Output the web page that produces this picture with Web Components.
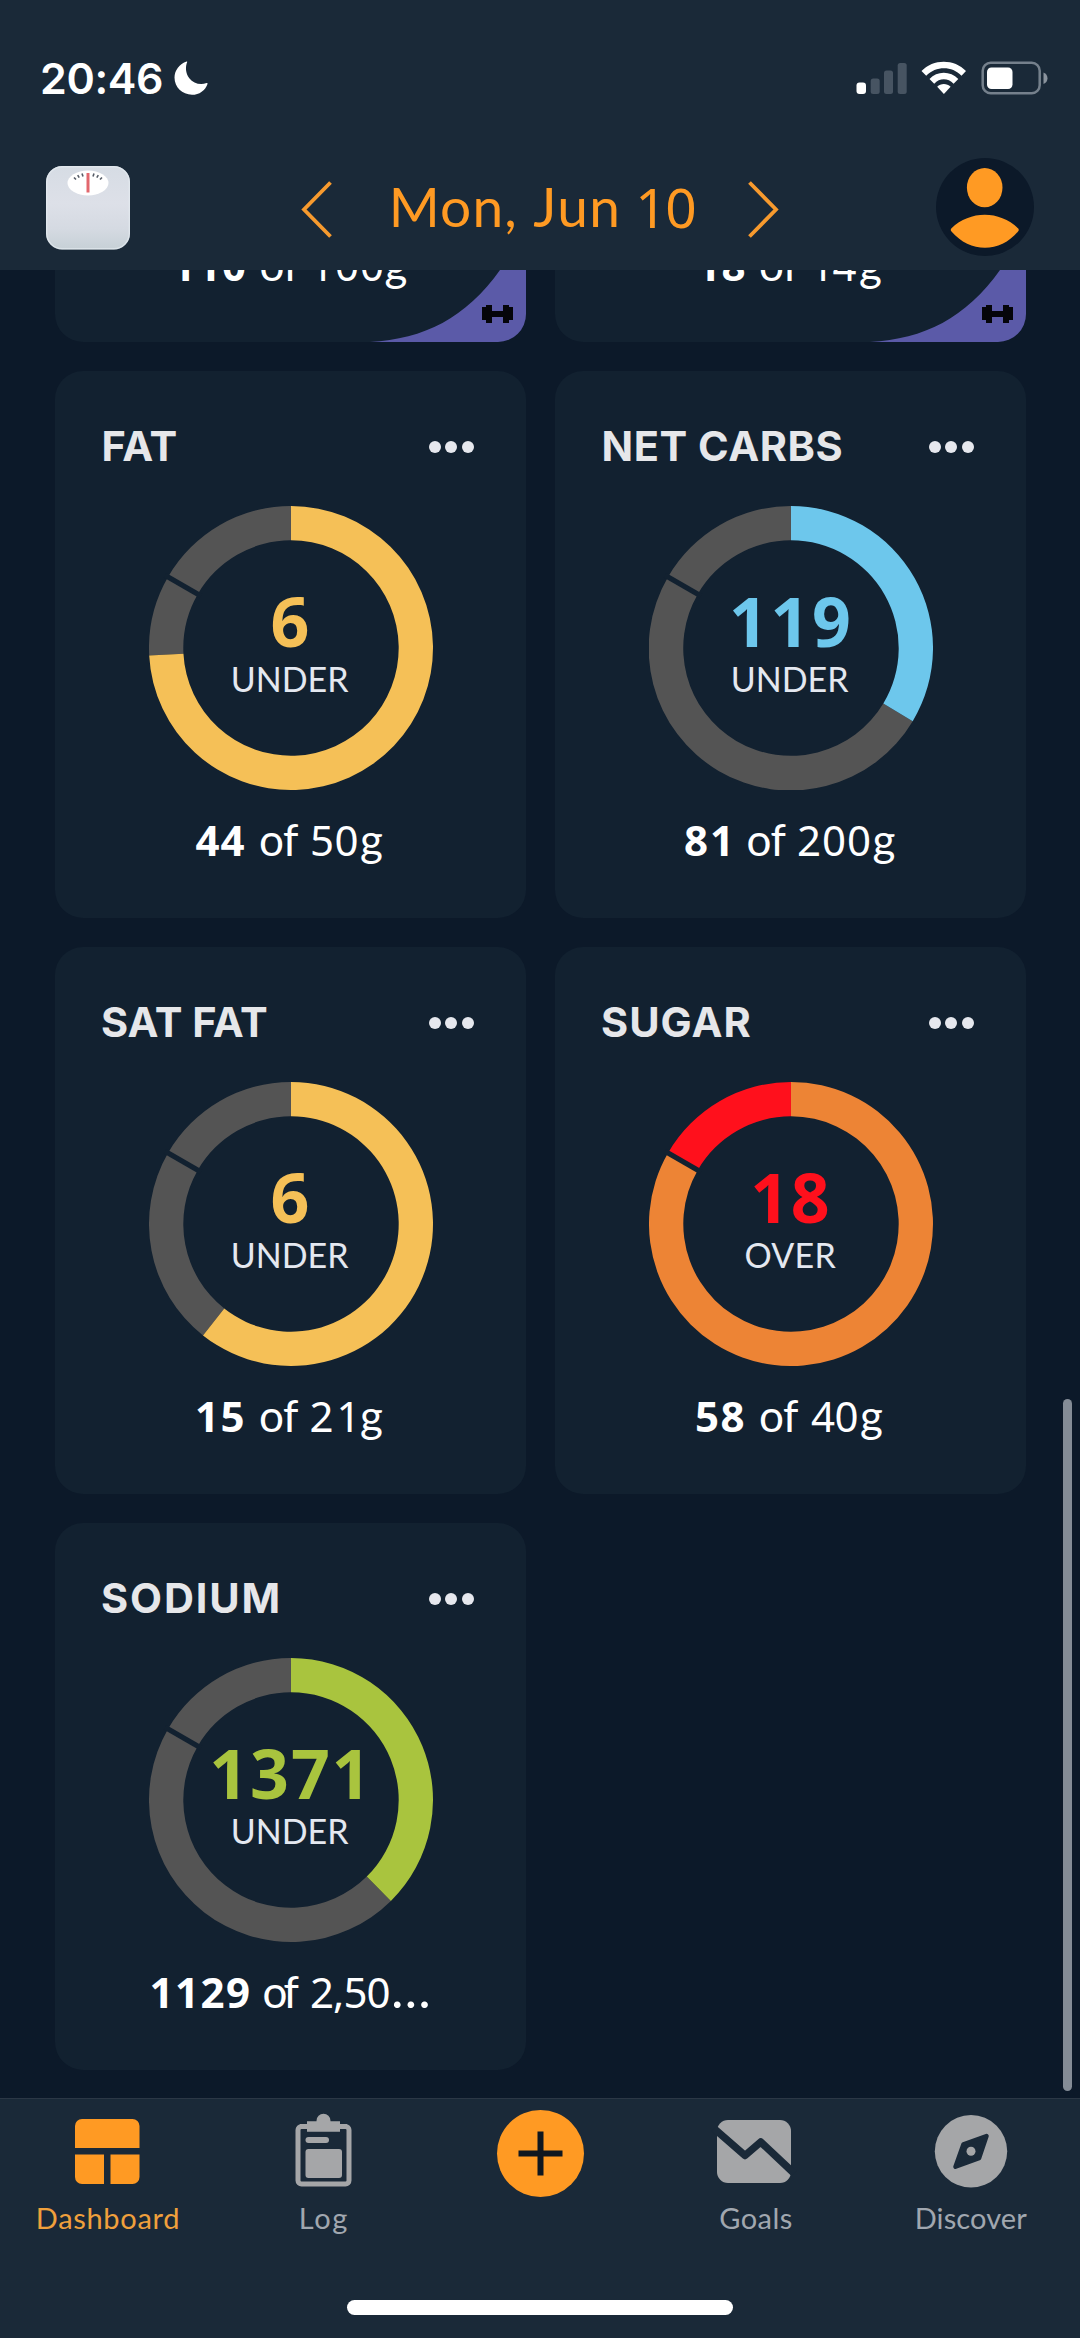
<!DOCTYPE html>
<html lang="en">
<head>
<meta charset="utf-8">
<title>Dashboard</title>
<style>
html,body{margin:0;padding:0}
body{background:#0c1929;font-family:Lato,"Open Sans",sans-serif;color:#fff}
</style>
</head>
<body>
<app-screen></app-screen>
<script>
const DIGITS = '"Noto Sans","Open Sans",sans-serif';

class BaseElement extends HTMLElement {
  paint(css, html) {
    const root = this.shadowRoot || this.attachShadow({ mode: 'open' });
    root.innerHTML = '<style>*{box-sizing:border-box}svg{display:block}' + css + '</style>' + html;
  }
}

/* A run of text whose box is its ink: w = ink width, cap = cap height. */
class FitText extends BaseElement {
  connectedCallback() {
    const w = +this.getAttribute('w'), cap = +this.getAttribute('cap'), text = this.textContent.trim();
    const cs = getComputedStyle(this);
    const ctx = document.createElement('canvas').getContext('2d');
    ctx.font = `${cs.fontWeight} ${cs.fontSize} ${cs.fontFamily}`;
    const m = ctx.measureText(text);
    const ink = m.actualBoundingBoxLeft + m.actualBoundingBoxRight;
    const ls = text.length > 1 ? (w - ink) / (text.length - 1) : 0;
    const A = m.fontBoundingBoxAscent, D = m.fontBoundingBoxDescent;
    const base = (cap - A - D) / 2 + A;
    this.paint(`:host{display:flow-root;flex:none;width:${w}px;height:${cap}px;white-space:nowrap}
      span{display:block;width:max-content;line-height:${cap}px;letter-spacing:${ls}px;margin:${cap - base}px 0 0 ${m.actualBoundingBoxLeft}px}`,
      '<span><slot></slot></span>');
  }
}
customElements.define('fit-text', FitText);

class StatusBar extends BaseElement {
  connectedCallback() {
    this.paint(`
      :host{display:flex;height:95px;padding:0 32px 0 42px;align-items:flex-end;justify-content:space-between}
      .l,.r{display:flex;align-items:flex-end}
      fit-text{font:600 43px Inter,sans-serif}
      .moon{margin-left:12px}`,
      `<div class="l"><fit-text w="120" cap="31.500">20:46</fit-text>
        <svg class="moon" width="34" height="34" viewBox="0 0 34 34"><path fill="#fff" d="M12.6 .5C13 .3 13.400.500 13.200 1 11.300 5.500 11.400 12.200 15.300 17.200 19.300 22.300 26 24.600 32.600 22.100 33.200 21.900 33.700 22.300 33.500 22.900 31.300 29.300 25.300 33.800 18 33.800 8.200 33.800.500 26.200.500 16.600.500 9.200 5.500 2.900 12.600.500z"/></svg></div>
       <div class="r"><svg width="192" height="34" viewBox="856 61.500 192 34">
        <rect x="856.500" y="83" width="9.500" height="11.500" rx="3" fill="#fff"/>
        <g fill="#475462"><rect x="870.700" y="79" width="9" height="15.500" rx="2.500"/><rect x="884" y="71" width="9" height="23.500" rx="2.500"/><rect x="897.700" y="63.500" width="9" height="31" rx="2.500"/></g>
        <g fill="#fff"><path d="M921.500 71.500C933 59 954.500 59 966 71.500L961.500 76.200C952 66.300 936 66.300 926.200 76.200Z"/>
        <path d="M929.500 79.500C937 71.300 950.500 71.300 958.300 79.500L953.600 84.200C948 78.300 939.600 78.300 934.200 84.200Z"/>
        <path d="M937.200 87.300C940.600 83.600 947 83.600 950.600 87.300L943.900 94.500Z"/></g>
        <rect x="982.700" y="63.200" width="57" height="30.600" rx="8" fill="none" stroke="#75808c" stroke-width="2.500"/>
        <rect x="987" y="68" width="25.500" height="21.500" rx="4.500" fill="#fff"/>
        <path d="M1043.500 73C1048.800 75 1048.800 82.500 1043.500 84.500Z" fill="#8a939d"/></svg></div>`);
  }
}
customElements.define('status-bar', StatusBar);

class DateHeader extends BaseElement {
  connectedCallback() {
    this.paint(`
      :host{display:flex;height:175px;padding:63px 46px 0;justify-content:space-between;align-items:flex-start}
      .date{display:flex;align-items:flex-start;padding-top:22.500px;margin-left:14px}
      .txt{display:flex;padding:8px 54px 0 62px;color:#ff9a23;font-size:55px}
      .txt fit-text+fit-text{margin-left:19px}
      .txt .num{font-family:${DIGITS};margin-left:22px!important}
      .scale{margin-top:8px}`,
      `<svg class="scale" width="84" height="84" viewBox="0 0 84 84"><defs><linearGradient id="g" x1="0" y1="0" x2="0" y2="1"><stop offset="0" stop-color="#d6dce4"/><stop offset=".45" stop-color="#dde0e8"/><stop offset=".75" stop-color="#d5dae2"/><stop offset="1" stop-color="#c6d0d6"/></linearGradient></defs>
        <rect width="84" height="83.500" rx="16" fill="url(#g)"/><rect x=".7" y=".7" width="82.600" height="82.100" rx="15.500" fill="none" stroke="#e7eef3" stroke-opacity=".6" stroke-width="1.400"/>
        <ellipse cx="42" cy="17" rx="20.500" ry="12.500" fill="#fff"/>
        <path d="M42 7v19.500" stroke="#e2676d" stroke-width="3"/>
        <path d="M28 11.500l2 2M31.700 9.200l1.500 2.500M36 7.500l1 3M48 7.500l-1 3M52.300 9.200l-1.500 2.500M56 11.500l-2 2" stroke="#555c66" stroke-width="1.600"/></svg>
      <div class="date"><svg width="31" height="57" viewBox="0 0 31 57"><path d="M29.500 1.500 3 28.500 29.500 55.500" fill="none" stroke="#f79a2e" stroke-width="3.800"/></svg>
        <div class="txt"><fit-text w="120.500" cap="39.500">Mon,</fit-text><fit-text w="84" cap="39.500">Jun</fit-text><fit-text class="num" w="55" cap="39.500">10</fit-text></div>
        <svg width="31" height="57" viewBox="0 0 31 57"><path d="M1.500 1.500 28 28.500 1.500 55.500" fill="none" stroke="#f79a2e" stroke-width="3.800"/></svg></div>
      <svg width="98" height="98" viewBox="936 158 98 98"><circle cx="985" cy="207" r="49" fill="#0c1929"/><ellipse cx="984.700" cy="187.600" rx="17.800" ry="19.700" fill="#ff9a23"/>
        <path d="M951.500 231.500C950.500 230.500 950.500 229.500 951.500 228.300C970 210.300 999.500 210.300 1018 228.300C1019 229.500 1019 230.500 1018 231.500C1000 253.200 970 253.200 951.500 231.500Z" fill="#ff9a23"/></svg>`);
  }
}
customElements.define('date-header', DateHeader);

/* parts: text | b(old)/d(igits)/l(etters)/e(llipsis) | ink width | gap before */
class CardCaption extends BaseElement {
  connectedCallback() {
    const parts = this.getAttribute('parts').split(';').map(p => p.split('|'));
    this.paint(`:host{display:flex;font-size:42px;color:#fff}
      .b{font-family:${DIGITS};font-weight:700}.d{font-family:${DIGITS};font-weight:400}.l{font-size:44px}.e{font-size:53px}`,
      parts.map(([t, c, w, g]) => `<fit-text class="${c}" w="${w}" cap="30" style="margin-left:${g}px">${t}</fit-text>`).join(''));
  }
}
customElements.define('card-caption', CardCaption);

class RingGauge extends BaseElement {
  arc(a0, a1, color) {
    const R = 142, r = 107.700, p = (a, q) => {
      const t = (a - 90) * Math.PI / 180;
      return (142 + q * Math.cos(t)).toFixed(2) + ' ' + (142 + q * Math.sin(t)).toFixed(2);
    };
    const big = a1 - a0 > 180 ? 1 : 0;
    return `<path fill="${color}" d="M${p(a0, R)}A${R} ${R} 0 ${big} 1 ${p(a1, R)}L${p(a1, r)}A${r} ${r} 0 ${big} 0 ${p(a0, r)}Z"/>`;
  }
  connectedCallback() {
    const angle = +this.getAttribute('angle'), color = this.getAttribute('color'), over = this.getAttribute('over');
    this.paint(`:host{display:grid;width:284px;height:284px}
      svg,.c{grid-area:1/1}
      .c{display:flex;flex-direction:column;align-items:center;padding-top:92px;gap:21px}`,
      `<svg width="284" height="284" viewBox="0 0 284 284">${angle < 300 ? this.arc(angle, 300, '#545454') : ''}${this.arc(300, 359.990, over || '#545454')}${this.arc(0, angle, color)}
        <path d="M52 90 16 69.200" stroke="#122130" stroke-width="5.200"/></svg><div class="c"><slot></slot></div>`);
  }
}
customElements.define('ring-gauge', RingGauge);

class NutrientCard extends BaseElement {
  connectedCallback() {
    const a = n => this.getAttribute(n);
    this.paint(`:host{display:flex;flex-direction:column;height:547px;background:#122130;border-radius:28px}
      .head{display:flex;justify-content:space-between;padding:60px 52.500px 0 ${a('tx')}px;font:700 41.500px Inter,sans-serif;color:#e6e7ea;height:135px}
      .dots{display:flex;gap:4.500px;margin-top:10px}.dots i{width:12px;height:12px;border-radius:50%;background:#e6e8ee}
      ring-gauge{margin-left:94px}
      .n{font:700 68px ${DIGITS};color:${a('ncolor')};margin-right:${a('shift') || 0}px}
      .s{font-size:34px;color:#e4e8f0}
      card-caption{margin:36px 0 0 ${a('cx')}px}`,
      `<div class="head"><fit-text w="${a('tw')}" cap="30">${a('title-text')}</fit-text><div class="dots"><i></i><i></i><i></i></div></div>
       <ring-gauge angle="${a('angle')}" color="${a('color')}" ${a('over') ? `over="${a('over')}"` : ''}>
         <fit-text class="n" w="${a('nw')}" cap="49">${a('n')}</fit-text><fit-text class="s" w="${a('sw')}" cap="24.500">${a('s')}</fit-text></ring-gauge>
       <card-caption parts="${a('parts')}"></card-caption>`);
  }
}
customElements.define('nutrient-card', NutrientCard);

/* Lower edge of a card that is scrolled under the header. */
class BoostedCardFoot extends BaseElement {
  connectedCallback() {
    this.paint(`:host{display:grid;height:72px;background:#122130;border-radius:0 0 28px 28px;overflow:hidden}
      svg,card-caption{grid-area:1/1}svg{justify-self:end}
      card-caption{margin:-19px 0 0 ${this.getAttribute('cx')}px}`,
      `<svg width="170" height="72" viewBox="0 0 170 72"><path d="M144 0H170V72H14C68 69 110 48 144 0Z" fill="#5b5aa8"/>
        <path fill="#05050a" d="M126 37h4v-2h6v6h11v-6h6v2h4v13h-4v3h-6v-6h-11v6h-6v-3h-4z"/></svg>
       <card-caption parts="${this.getAttribute('parts')}"></card-caption>`);
  }
}
customElements.define('boosted-card-foot', BoostedCardFoot);

class CardList extends BaseElement {
  connectedCallback() {
    this.paint(`:host{display:flex;height:1828px;overflow:hidden;justify-content:space-between;padding:0 8px 0 55px}
      .grid{display:grid;grid-template-columns:471px 471px;gap:29px;align-content:start}
      .bar{width:9px;height:692px;margin-top:1128.500px;border-radius:5px;background:#848c96}`,
      `<div class="grid">
        <boosted-card-foot cx="118.500" parts="110|b|71.500|0;of|l|38|15.500;100|d|69|14.500;g|l|22|3.500"></boosted-card-foot>
        <boosted-card-foot cx="143.500" parts="18|b|46|0;of|l|38|15.500;14|d|43.500|15;g|l|22|3.500"></boosted-card-foot>
        <nutrient-card title-text="FAT" tx="48.500" tw="73" n="6" nw="36" shift="1" ncolor="#f5c057" s="UNDER" sw="116.500" angle="267" color="#f5c057" cx="140.500" parts="44|b|49|0;of|l|38|15.500;50|d|44.500|14;g|l|22.500|4.500"></nutrient-card>
        <nutrient-card title-text="NET CARBS" tx="48.500" tw="238" n="119" nw="116" ncolor="#6dc7ec" s="UNDER" sw="116.500" angle="121" color="#6dc7ec" cx="130" parts="81|b|43|0;of|l|38|19.500;200|d|70|13.500;g|l|22.500|4.500"></nutrient-card>
        <nutrient-card title-text="SAT FAT" tx="47" tw="165" n="6" nw="36" shift="1" ncolor="#f5c057" s="UNDER" sw="116.500" angle="218.300" color="#f5c057" cx="142" parts="15|b|46.500|0;of|l|38|16.500;21|d|40|13.500;g|l|22.500|9.500"></nutrient-card>
        <nutrient-card title-text="SUGAR" tx="47" tw="148.500" n="18" nw="73.500" ncolor="#ff101c" s="OVER" sw="91" angle="300" over="#ff101c" color="#ed8435" cx="142" parts="58|b|46.500|0;of|l|38|16.500;40|d|45.500|13;g|l|22.500|4.500"></nutrient-card>
        <nutrient-card title-text="SODIUM" tx="47" tw="175.500" n="1371" nw="147.500" shift="8" ncolor="#a9c43e" s="UNDER" sw="116.500" angle="135.300" color="#a9c43e" cx="96.500" parts="1129|b|97.500|0;of|l|35|14.500;2,50|d|76.500|13.500;…|e|35.500|4.500"></nutrient-card>
      </div><div class="bar"></div>`);
  }
}
customElements.define('card-list', CardList);

class TabItem extends BaseElement {
  connectedCallback() {
    const on = this.hasAttribute('active');
    this.paint(`:host{display:flex;flex-direction:column;align-items:center;width:216px;color:${on ? '#ff9a23' : '#a5a6a8'};font-size:29px}
      .i{height:110px;flex:none}fit-text{color:${on ? '#f0a03c' : '#a1a7af'}}`,
      `<div class="i"><slot></slot></div>${this.getAttribute('label') ? `<fit-text w="${this.getAttribute('w')}" cap="20.500">${this.getAttribute('label')}</fit-text>` : ''}`);
  }
}
customElements.define('tab-item', TabItem);

class TabBar extends BaseElement {
  connectedCallback() {
    const svg = (cx, body) => `<svg width="92" height="110" viewBox="${cx - 46} 2099 92 110" fill="currentColor">${body}</svg>`;
    this.paint(`:host{display:flex;flex-direction:column;align-items:center;height:240px;background:#1a2938;border-top:1px solid #2b3745}
      .tabs{display:flex;width:1080px;height:201px}
      .home{width:386px;height:15px;border-radius:7.500px;background:#fff}`,
      `<div class="tabs">
        <tab-item active label="Dashboard" w="140.500">${svg(108, '<path d="M82 2119h50.500a7 7 0 0 1 7 7v22H75v-22a7 7 0 0 1 7-7zM75 2154.500h29v29.500H82a7 7 0 0 1-7-7zM110.500 2154.500h29v22.500a7 7 0 0 1-7 7h-22z"/>')}</tab-item>
        <tab-item label="Log" w="46.500">${svg(324, '<rect x="298" y="2126.500" width="51" height="57.500" rx="3.500" fill="none" stroke="currentColor" stroke-width="5"/><path d="M300 2124h7v-2.700h9.500v-.6a7 7 0 0 1 14 0v.6h9.500v2.700h7v4.800h-7v2.900h-33v-2.900h-7z"/><rect x="305.500" y="2137" width="23.500" height="6" rx="3"/><rect x="305.500" y="2149" width="36.500" height="29" rx="3"/>')}</tab-item>
        <tab-item>${svg(540, '<circle cx="540.500" cy="2153.500" r="43.500" fill="#ff9a23"/><path d="M518.500 2153.500h44M540.500 2131.500v44" stroke="#0f1720" stroke-width="6"/>')}</tab-item>
        <tab-item label="Goals" w="71.500">${svg(756, '<rect x="717" y="2120" width="74" height="63" rx="11"/><path d="M714 2128.500 745 2155.500 760.700 2142 794 2173.300" fill="none" stroke="#1a2938" stroke-width="7.500" stroke-linejoin="round"/>')}</tab-item>
        <tab-item label="Discover" w="110.500">${svg(972, '<circle cx="971" cy="2151.300" r="36.200"/><path d="M963.500 2144.300 986.500 2136 979 2158.200 955.500 2166.700Z" fill="#1a2938" stroke="#1a2938" stroke-width="4.500" stroke-linejoin="round"/><circle cx="971" cy="2151.300" r="4.500"/>')}</tab-item>
      </div><div class="home"></div>`);
  }
}
customElements.define('tab-bar', TabBar);

class AppScreen extends BaseElement {
  connectedCallback() {
    this.paint(`:host{display:flex;flex-direction:column;width:1080px;height:2338px;overflow:hidden;background:#0c1929}
      header{background:#1a2938;height:270px;flex:none}`,
      '<header><status-bar></status-bar><date-header></date-header></header><card-list></card-list><tab-bar></tab-bar>');
  }
}
customElements.define('app-screen', AppScreen);
</script>
</body>
</html>
